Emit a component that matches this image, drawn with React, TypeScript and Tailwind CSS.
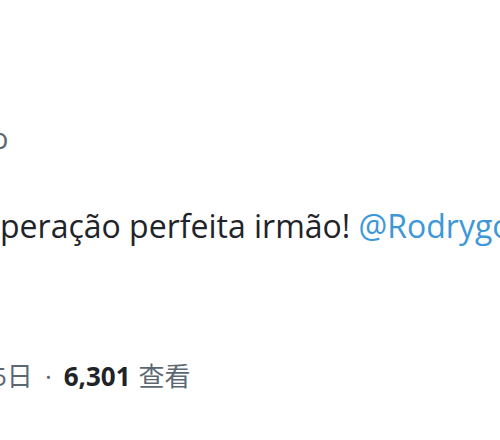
export default function App() {
  return (
    <div className="w-[500px] h-[440px] overflow-hidden bg-white font-['Open_Sans','Noto_Sans_CJK_SC',sans-serif] antialiased">
      <div className="flex flex-col pt-[118px]">
        {/* handle, clipped at the left edge */}
        <div className="-ml-[9px] text-[29px] leading-[40px] text-[#5b6873] whitespace-nowrap">
          o
        </div>

        {/* tweet body */}
        <p className="mt-[48px] text-[32px] leading-[40px] text-[#1f2428] whitespace-nowrap">
          peração perfeita irmão!{" "}
          <span className="text-[#3d97d8]">@Rodrygo</span>
        </p>

        {/* date and views */}
        <div className="mt-[112px] flex items-center whitespace-nowrap text-[26px] leading-[36px] text-[#5b6873]">
          <span className="-ml-[8px]">5日</span>
          <span className="mx-[12px]">·</span>
          <span className="font-bold text-[#1f2428]">6,301</span>
          <span className="ml-[8px]">查看</span>
        </div>
      </div>
    </div>
  );
}
